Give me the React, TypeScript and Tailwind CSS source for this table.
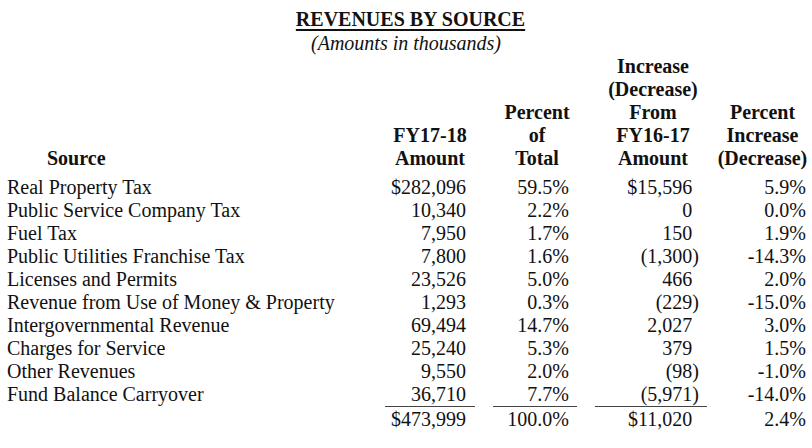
import React from "react";

type Row = {
  source: string;
  amount: string;
  pct: string;
  change: string;
  changePct: string;
};

const rows: Row[] = [
  { source: "Real Property Tax", amount: "$282,096", pct: "59.5%", change: "$15,596", changePct: "5.9%" },
  { source: "Public Service Company Tax", amount: "10,340", pct: "2.2%", change: "0", changePct: "0.0%" },
  { source: "Fuel Tax", amount: "7,950", pct: "1.7%", change: "150", changePct: "1.9%" },
  { source: "Public Utilities Franchise Tax", amount: "7,800", pct: "1.6%", change: "(1,300)", changePct: "-14.3%" },
  { source: "Licenses and Permits", amount: "23,526", pct: "5.0%", change: "466", changePct: "2.0%" },
  { source: "Revenue from Use of Money & Property", amount: "1,293", pct: "0.3%", change: "(229)", changePct: "-15.0%" },
  { source: "Intergovernmental Revenue", amount: "69,494", pct: "14.7%", change: "2,027", changePct: "3.0%" },
  { source: "Charges for Service", amount: "25,240", pct: "5.3%", change: "379", changePct: "1.5%" },
  { source: "Other Revenues", amount: "9,550", pct: "2.0%", change: "(98)", changePct: "-1.0%" },
  { source: "Fund Balance Carryover", amount: "36,710", pct: "7.7%", change: "(5,971)", changePct: "-14.0%" },
];

const total = { amount: "$473,999", pct: "100.0%", change: "$11,020", changePct: "2.4%" };

// negatives hang their ")" past the digits, so positives get a hidden one
function Change({ value }: { value: string }) {
  if (value.endsWith(")")) return <>{value}</>;
  return (
    <>
      {value}
      <span className="invisible">)</span>
    </>
  );
}

function HeaderCell({ lines, className = "" }: { lines: string[]; className?: string }) {
  return (
    <div className={`flex flex-col items-center justify-end whitespace-nowrap ${className}`}>
      {lines.map((l) => (
        <div key={l}>{l}</div>
      ))}
    </div>
  );
}

export default function App() {
  const grid = "grid grid-cols-[367px_90px_84px_112px_1fr] gap-x-[18px]";

  return (
    <div className="w-[812px] h-[448px] bg-white text-[#111] font-['Liberation_Serif',serif] text-[20px] overflow-hidden pt-[7px]">
      <div className="text-center leading-[24px] font-bold pl-[9px]">
        <span className="underline decoration-2 underline-offset-[3px]">REVENUES BY SOURCE</span>
      </div>
      <div className="text-center leading-[24px] italic">(Amounts in thousands)</div>

      <div className={`${grid} font-bold leading-[23px]`}>
        <div className="flex flex-col justify-end pl-[47px]">Source</div>
        <HeaderCell lines={["FY17-18", "Amount"]} />
        <HeaderCell lines={["Percent", "of", "Total"]} className="pl-[4px]" />
        <HeaderCell lines={["Increase", "(Decrease)", "From", "FY16-17", "Amount"]} className="pl-[4px]" />
        <HeaderCell lines={["Percent", "Increase", "(Decrease)"]} className="-ml-[8px] mr-[4px]" />
      </div>

      <div className="mt-[6px] leading-[23px]">
        {rows.map((r, i) => {
          const last = i === rows.length - 1;
          const line = last ? "border-b-[1.5px] border-[#444]" : "";
          return (
            <div key={r.source} className={grid}>
              <div className="pl-[7px] whitespace-nowrap">{r.source}</div>
              <div className={`text-right pr-[9px] ${line}`}>{r.amount}</div>
              <div className={`text-right pr-[8px] ${line}`}>{r.pct}</div>
              <div className={`text-right pr-[8px] ${line}`}>
                <Change value={r.change} />
              </div>
              <div className="text-right pr-[6px]">{r.changePct}</div>
            </div>
          );
        })}
        <div className={`${grid} pt-[1px]`}>
          <div />
          <div className="text-right pr-[9px]">{total.amount}</div>
          <div className="text-right pr-[8px]">{total.pct}</div>
          <div className="text-right pr-[8px]">
            <Change value={total.change} />
          </div>
          <div className="text-right pr-[6px]">{total.changePct}</div>
        </div>
      </div>
    </div>
  );
}
